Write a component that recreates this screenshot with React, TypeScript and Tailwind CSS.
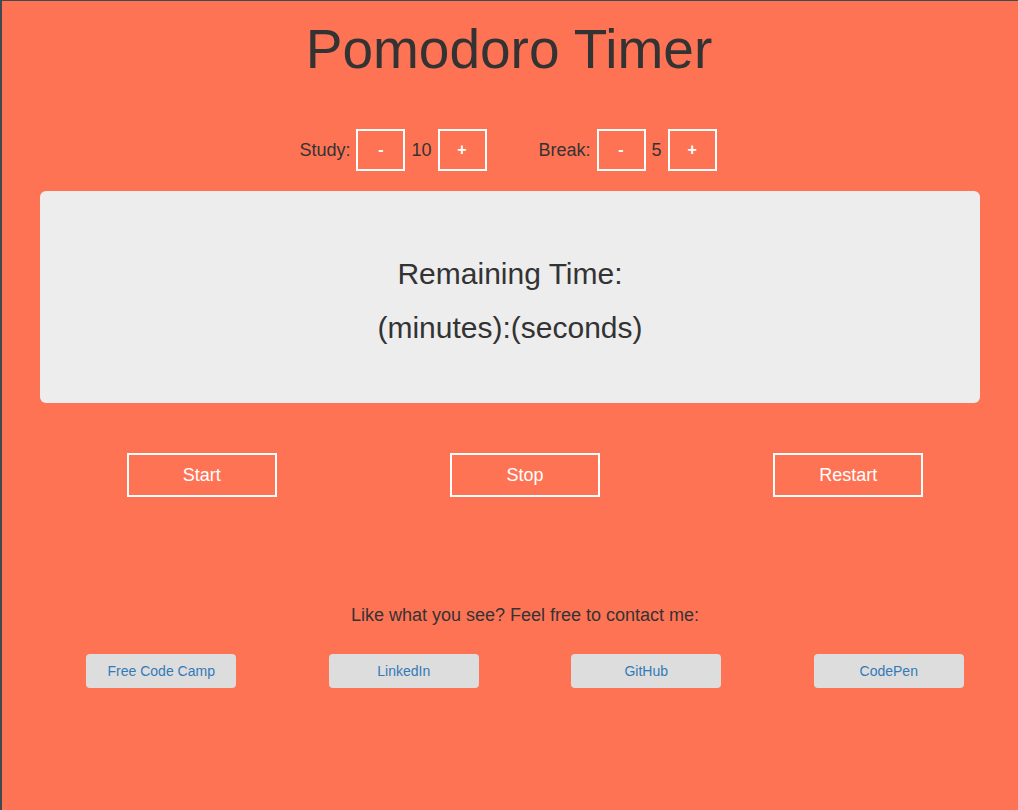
const links = ['Free Code Camp', 'LinkedIn', 'GitHub', 'CodePen'];

function StepButton({ label }: { label: string }) {
  return (
    <button className="w-[49px] h-[42px] border-2 border-white text-white text-[16px] font-bold flex items-center justify-center">
      {label}
    </button>
  );
}

export default function App() {
  return (
    <div
      className="min-h-[810px] w-[1018px] bg-[#ff7355] border-l-2 border-t border-[#3d4a50] text-[#333]"
      style={{ fontFamily: '"Liberation Sans", Arial, sans-serif' }}
    >
      <h1 className="text-center text-[55px] leading-[62px] pt-[17px] pr-[2px]">Pomodoro Timer</h1>

      <div className="flex justify-center items-center mt-[49px] text-[18px] pr-[4px]">
        <div className="flex items-center gap-[6px]">
          <span>Study:</span>
          <StepButton label="-" />
          <span>10</span>
          <StepButton label="+" />
        </div>
        <div className="flex items-center gap-[6px] ml-[52px]">
          <span>Break:</span>
          <StepButton label="-" />
          <span>5</span>
          <StepButton label="+" />
        </div>
      </div>

      <div className="ml-[38px] mt-[20px] w-[940px] h-[212px] bg-[#ededed] rounded-[6px] flex flex-col items-center justify-center pt-[8px] text-[30px] leading-[54px] text-[#333]">
        <div>Remaining Time:</div>
        <div>(minutes):(seconds)</div>
      </div>

      <div className="ml-[38px] w-[970px] grid grid-cols-3 mt-[50px]">
        {['Start', 'Stop', 'Restart'].map((b) => (
          <div key={b} className="flex justify-center">
            <button className="w-[150px] h-[44px] border-2 border-white text-white text-[18px]">{b}</button>
          </div>
        ))}
      </div>

      <div className="ml-[38px] w-[970px]">
        <p className="text-center text-[18px] mt-[105px]">Like what you see? Feel free to contact me:</p>
        <div className="grid grid-cols-4 mt-[25px]">
          {links.map((l) => (
            <div key={l} className="flex justify-center">
              <a className="w-[150px] h-[34px] bg-[#dddddd] rounded-[4px] text-[#337ab7] text-[14px] flex items-center justify-center">
                {l}
              </a>
            </div>
          ))}
        </div>
      </div>
    </div>
  );
}
